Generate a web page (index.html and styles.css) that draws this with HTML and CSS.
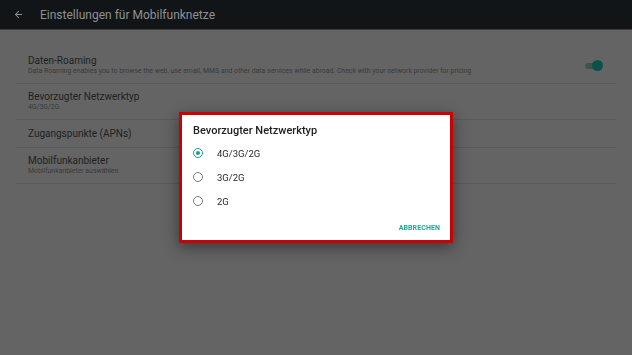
FILE: index.html
```html
<!DOCTYPE html>
<html lang="de">
<head>
<meta charset="utf-8">
<title>Einstellungen für Mobilfunknetze</title>
<link rel="stylesheet" href="styles.css">
</head>
<body>
<header class="appbar">
  <svg class="back" width="11" height="11" viewBox="0 0 24 24"><path d="M20 11H7.83l5.59-5.59L12 4l-8 8 8 8 1.41-1.41L7.83 13H20v-2z" fill="currentColor"/></svg>
  <h1 class="appbar-title">Einstellungen für Mobilfunknetze</h1>
</header>
<main class="list">
  <div class="row">
    <div class="row-text">
      <div class="row-title">Daten-Roaming</div>
      <div class="row-sub">Data Roaming enables you to browse the web, use email, MMS and other data services while abroad. Check with your network provider for pricing</div>
    </div>
    <div class="switch"><span class="track"></span><span class="thumb"></span></div>
  </div>
  <div class="row">
    <div class="row-text">
      <div class="row-title">Bevorzugter Netzwerktyp</div>
      <div class="row-sub">4G/3G/2G</div>
    </div>
  </div>
  <div class="row">
    <div class="row-text">
      <div class="row-title">Zugangspunkte (APNs)</div>
    </div>
  </div>
  <div class="row">
    <div class="row-text">
      <div class="row-title">Mobilfunkanbieter</div>
      <div class="row-sub">Mobilfunkanbieter auswählen</div>
    </div>
  </div>
</main>
<div class="overlay">
  <div class="dialog">
    <div class="dialog-title">Bevorzugter Netzwerktyp</div>
    <div class="options">
      <div class="option"><span class="radio checked"></span><span class="opt-label">4G/3G/2G</span></div>
      <div class="option"><span class="radio"></span><span class="opt-label">3G/2G</span></div>
      <div class="option"><span class="radio"></span><span class="opt-label">2G</span></div>
    </div>
    <div class="actions"><span class="btn">ABBRECHEN</span></div>
  </div>
</div>
</body>
</html>
```
FILE: styles.css
```css
html, body {
  margin: 0;
  padding: 0;
}
body {
  width: 632px;
  height: 355px;
  background: #646464;
  font-family: Roboto, "Liberation Sans", sans-serif;
  overflow: hidden;
}
.appbar {
  height: 30px;
  background: #121518;
  display: flex;
  align-items: center;
  padding-left: 13px;
  box-sizing: border-box;
  border-bottom: 1px solid #3a3c3e;
  color: #8c8e90;
}
.back {
  display: block;
}
.appbar-title {
  margin: 0 0 0 16px;
  font-size: 12px;
  font-weight: 400;
  color: #8e9092;
}
.list {
  padding: 18px 16px 0 16px;
}
.row {
  display: flex;
  align-items: center;
  padding: 7px 12px;
  min-height: 13px;
  border-bottom: 1px solid #5a5a5a;
}
.row-text {
  flex: 1;
}
.row-title {
  font-size: 10px;
  line-height: 12px;
  color: #1f1f1f;
}
.row-sub {
  font-size: 6.9px;
  line-height: 9px;
  color: #3a3a3a;
}
.switch {
  position: relative;
  width: 20px;
  height: 11px;
}
.track {
  position: absolute;
  left: 1px;
  top: 2.5px;
  width: 16px;
  height: 6px;
  border-radius: 3px;
  background: #3d5552;
}
.thumb {
  position: absolute;
  right: 1px;
  top: 0;
  width: 11px;
  height: 11px;
  border-radius: 50%;
  background: #0c5147;
}
.overlay {
  position: fixed;
  inset: 0;
  display: flex;
  align-items: center;
  justify-content: center;
}
.dialog {
  width: 268px;
  height: 125px;
  box-sizing: content-box;
  border: 3px solid #cc0000;
  background: #fff;
  box-shadow: 0 4px 14px rgba(0,0,0,0.45);
  display: flex;
  flex-direction: column;
}
.dialog-title {
  font-size: 11px;
  font-weight: 500;
  color: #212121;
  padding: 9px 0 0 11px;
  line-height: 14px;
}
.options {
  padding: 3px 0 0 11px;
}
.option {
  display: flex;
  align-items: center;
  height: 24px;
}
.radio {
  width: 8px;
  height: 8px;
  border: 1.5px solid #7a7a7a;
  border-radius: 50%;
  margin-right: 14px;
  position: relative;
  box-sizing: content-box;
}
.radio.checked {
  border-color: #1f9f8f;
}
.radio.checked::after {
  content: "";
  position: absolute;
  left: 2px;
  top: 2px;
  width: 4px;
  height: 4px;
  border-radius: 50%;
  background: #1f9f8f;
}
.opt-label {
  font-size: 9.5px;
  color: #2a2a2a;
}
.actions {
  margin-top: auto;
  display: flex;
  justify-content: flex-end;
  padding: 0 10px 8px 0;
}
.btn {
  font-size: 7px;
  font-weight: 700;
  color: #26a69a;
  letter-spacing: 0.1px;
}
```
